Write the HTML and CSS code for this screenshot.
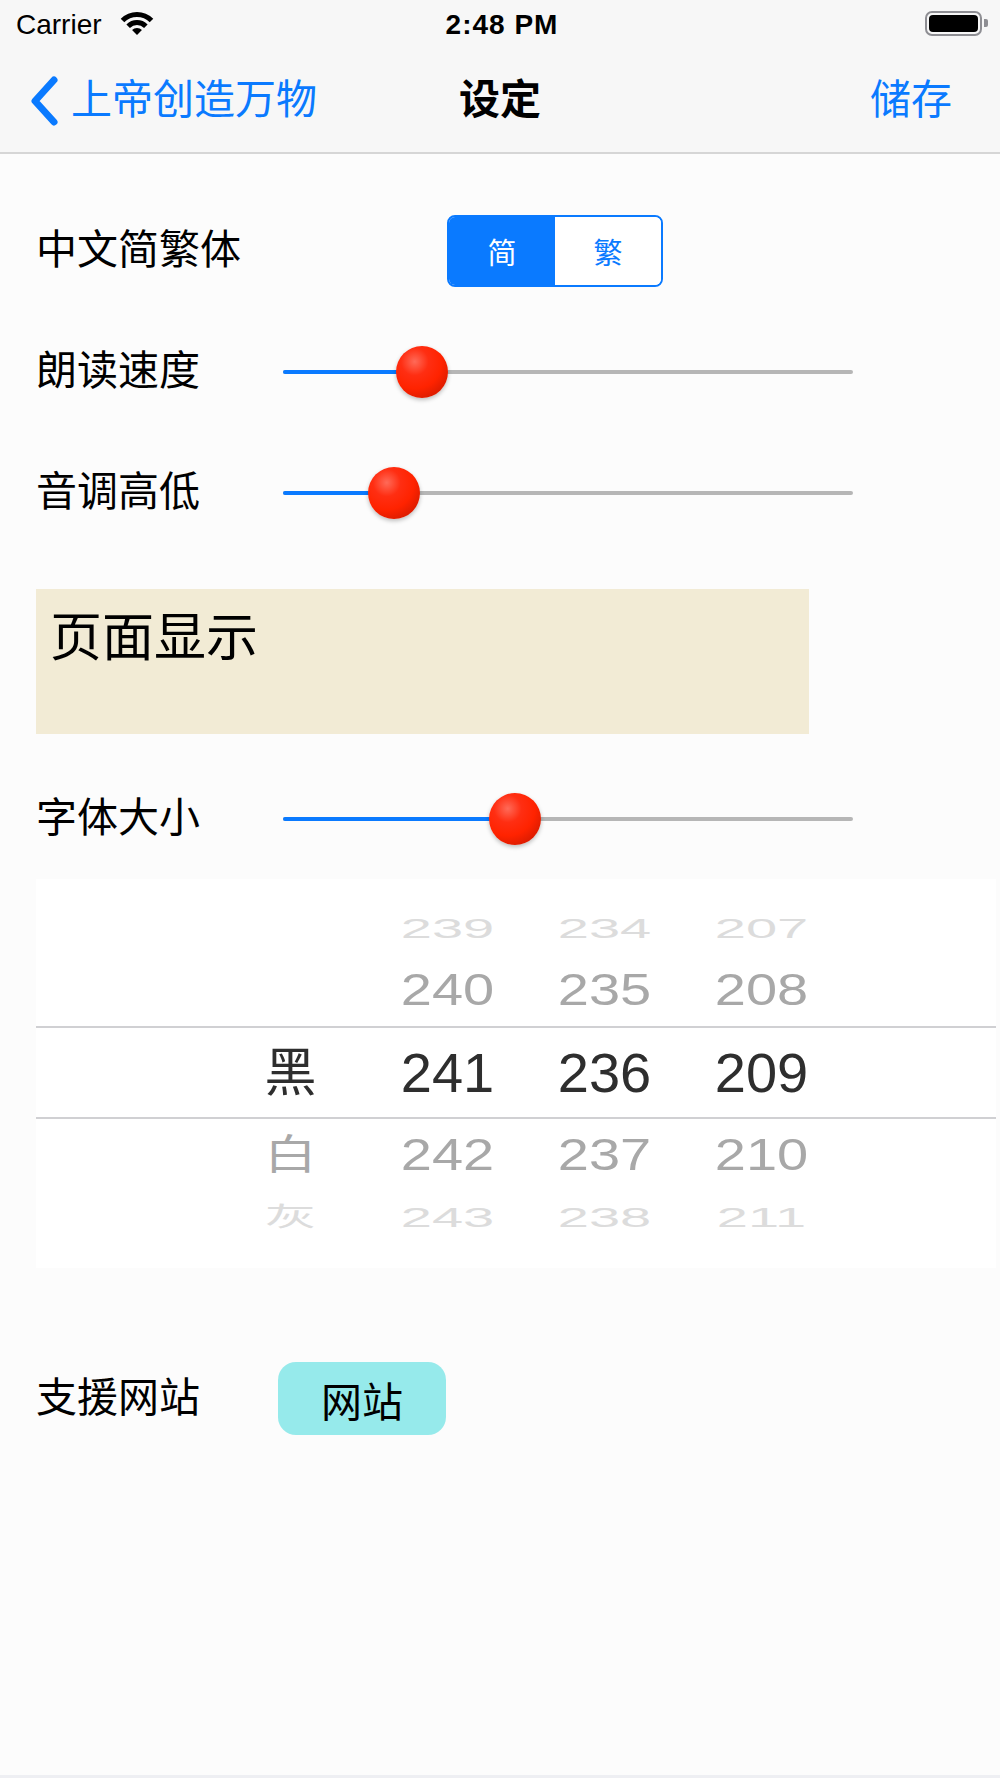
FILE: index.html
```html
<!DOCTYPE html>
<html lang="zh-CN">
<head>
    <meta charset="UTF-8">
    <meta name="viewport" content="width=device-width, initial-scale=1.0">
    <title>设定</title>
    <link rel="stylesheet" href="styles.css">
</head>
<body>
    <div class="screen">
        <!-- ステータスバー -->
        <div class="status-bar">
            <div class="status-left">
                <span class="carrier">Carrier</span>
                <svg class="wifi" viewBox="0 0 36 24">
                    <path d="M1.74 6.74 A23 23 0 0 1 34.26 6.74 L30.73 10.27 A18 18 0 0 0 5.27 10.27 Z"/>
                    <path d="M7.39 12.39 A15 15 0 0 1 28.61 12.39 L25.07 15.93 A10 10 0 0 0 10.93 15.93 Z"/>
                    <path d="M18 23 L13.05 18.05 A7 7 0 0 1 22.95 18.05 Z"/>
                </svg>
            </div>
            <div class="status-time">2:48 PM</div>
            <div class="status-right">
                <span class="battery"><span class="battery-level"></span></span>
                <span class="battery-nub"></span>
            </div>
        </div>

        <!-- ナビゲーション -->
        <nav class="nav-bar">
            <a class="nav-back" href="#">
                <svg class="chevron" viewBox="0 0 32 52">
                    <path d="M25 5 L6 26 L25 47"/>
                </svg>
                <span>上帝创造万物</span>
            </a>
            <h1 class="nav-title">设定</h1>
            <a class="nav-action" href="#">储存</a>
        </nav>

        <main class="settings">
            <div class="setting-row row-lang">
                <span class="setting-label">中文简繁体</span>
                <div class="segmented">
                    <button class="segment active">简</button>
                    <button class="segment">繁</button>
                </div>
            </div>

            <div class="setting-row row-slider row-speed">
                <span class="setting-label">朗读速度</span>
                <div class="slider">
                    <div class="slider-fill" style="width: 24.4%"></div>
                    <div class="slider-thumb" style="left: 24.4%"></div>
                </div>
            </div>

            <div class="setting-row row-slider row-pitch">
                <span class="setting-label">音调高低</span>
                <div class="slider">
                    <div class="slider-fill" style="width: 19.5%"></div>
                    <div class="slider-thumb" style="left: 19.5%"></div>
                </div>
            </div>

            <div class="display-box">页面显示</div>

            <div class="setting-row row-slider row-size">
                <span class="setting-label">字体大小</span>
                <div class="slider">
                    <div class="slider-fill" style="width: 40.7%"></div>
                    <div class="slider-thumb" style="left: 40.7%"></div>
                </div>
            </div>

            <!-- 色ピッカー -->
            <div class="picker">
                <div class="picker-row far">
                    <span class="picker-item name"></span>
                    <span class="picker-item">239</span>
                    <span class="picker-item">234</span>
                    <span class="picker-item">207</span>
                </div>
                <div class="picker-row near">
                    <span class="picker-item name"></span>
                    <span class="picker-item">240</span>
                    <span class="picker-item">235</span>
                    <span class="picker-item">208</span>
                </div>
                <div class="picker-row selected">
                    <span class="picker-item name">黑</span>
                    <span class="picker-item">241</span>
                    <span class="picker-item">236</span>
                    <span class="picker-item">209</span>
                </div>
                <div class="picker-row near">
                    <span class="picker-item name">白</span>
                    <span class="picker-item">242</span>
                    <span class="picker-item">237</span>
                    <span class="picker-item">210</span>
                </div>
                <div class="picker-row far">
                    <span class="picker-item name">灰</span>
                    <span class="picker-item">243</span>
                    <span class="picker-item">238</span>
                    <span class="picker-item">211</span>
                </div>
            </div>

            <div class="setting-row row-site">
                <span class="setting-label">支援网站</span>
                <button class="site-button">网站</button>
            </div>
        </main>

        <div class="bottom-bar"></div>
    </div>
</body>
</html>
```

FILE: styles.css
```css
* {
    margin: 0;
    padding: 0;
    box-sizing: border-box;
}

body {
    font-family: "Liberation Sans", "Noto Sans CJK SC", sans-serif;
    background: #fcfcfc;
    color: #000;
}

.screen {
    width: 1000px;
    height: 1778px;
    display: flex;
    flex-direction: column;
}

/* status bar */
.status-bar {
    height: 50px;
    background: #f7f7f7;
    display: grid;
    grid-template-columns: 1fr auto 1fr;
    align-items: center;
    padding: 0 12px 0 16px;
    font-size: 28px;
}

.status-left {
    display: flex;
    align-items: center;
    gap: 17px;
}

.wifi {
    width: 36px;
    height: 24px;
    fill: #000;
    margin-top: -2px;
}

.status-time {
    font-weight: 700;
    letter-spacing: 1px;
}

.status-right {
    display: flex;
    justify-content: flex-end;
    align-items: center;
    gap: 2px;
    margin-bottom: 4px;
}

.battery {
    width: 57px;
    height: 25px;
    border: 2px solid #8e8e93;
    border-radius: 7px;
    padding: 2px;
    display: flex;
}

.battery-level {
    flex: 1;
    background: #000;
    border-radius: 4px;
}

.battery-nub {
    width: 4px;
    height: 8px;
    background: #8e8e93;
    border-radius: 0 2px 2px 0;
}

/* navigation */
.nav-bar {
    height: 104px;
    background: #f7f7f7;
    border-bottom: 2px solid #d6d6d6;
    display: grid;
    grid-template-columns: 1fr auto 1fr;
    align-items: center;
    padding: 0 48px;
    font-size: 41px;
    line-height: 1.2;
}

.nav-back {
    display: flex;
    align-items: center;
    gap: 10px;
    margin-left: -19px;
    color: #0a7aff;
    text-decoration: none;
}

.chevron {
    width: 32px;
    height: 52px;
    fill: none;
    stroke: #0a7aff;
    stroke-width: 7;
    stroke-linecap: round;
    stroke-linejoin: round;
}

.nav-title {
    font-size: 41px;
    font-weight: 700;
}

.nav-action {
    justify-self: end;
    color: #0a7aff;
    text-decoration: none;
}

/* settings */
.settings {
    flex: 1;
    display: flex;
    flex-direction: column;
}

.setting-row {
    display: flex;
    align-items: center;
    padding-left: 36px;
}

.setting-label {
    flex: none;
    font-size: 41px;
    line-height: 1.2;
}

.row-lang {
    margin-top: 61px;
    height: 72px;
}

.row-lang .setting-label {
    width: 411px;
}

.segmented {
    display: flex;
    width: 216px;
    height: 72px;
    border: 2px solid #0a7aff;
    border-radius: 8px;
    overflow: hidden;
}

.segment {
    flex: 1;
    border: none;
    background: #fff;
    color: #0a7aff;
    font-family: "Noto Sans CJK SC", sans-serif;
    font-size: 29px;
}

.segment.active {
    background: #0a7aff;
    color: #fff;
}

.row-slider {
    height: 52px;
}

.row-slider .setting-label {
    width: 247px;
}

.row-speed {
    margin-top: 59px;
}

.row-pitch {
    margin-top: 69px;
}

.row-size {
    margin-top: 59px;
}

.slider {
    position: relative;
    width: 570px;
    height: 4px;
    background: #b6b6b6;
    border-radius: 2px;
}

.slider-fill {
    height: 100%;
    background: #0a7aff;
    border-radius: 2px;
}

.slider-thumb {
    position: absolute;
    top: 50%;
    width: 52px;
    height: 52px;
    border-radius: 50%;
    transform: translate(-50%, -50%);
    background: radial-gradient(circle at 36% 30%, #ff6a58 0%, #ff2e12 28%, #ff2300 55%, #dd1c00 78%, #9a1200 100%);
    box-shadow: 0 2px 4px rgba(0, 0, 0, 0.25);
}

.display-box {
    margin: 70px 0 0 36px;
    width: 773px;
    height: 145px;
    background: #f2ebd5;
    padding: 18px 14px;
    font-size: 52px;
    line-height: 1.2;
}

/* color picker */
.picker {
    margin: 34px 0 0 36px;
    width: 960px;
    height: 389px;
    background: #fff;
    padding: 18px 0 20px;
}

.picker-row {
    display: grid;
    grid-template-columns: repeat(4, 157px);
    padding-left: 176px;
    height: 62px;
    align-items: center;
    text-align: center;
    font-size: 56px;
}

.picker-item {
    display: block;
    line-height: 1;
}

.picker-item.name {
    font-size: 52px;
}

.picker-row.selected {
    height: 93px;
    margin: 5px 0;
    border-top: 2px solid #d0d0d3;
    border-bottom: 2px solid #d0d0d3;
    color: #2e2e2e;
}

.picker-row.near {
    color: #a8a8a8;
}

.picker-row.near .picker-item {
    transform: scaleY(0.78);
}

.picker-row.far {
    color: #dcdcdc;
}

.picker-row.far .picker-item {
    transform: scaleY(0.5);
}

/* support site */
.row-site {
    margin-top: 94px;
    height: 73px;
}

.row-site .setting-label {
    width: 242px;
}

.site-button {
    width: 168px;
    height: 73px;
    border: none;
    border-radius: 18px;
    background: #96eaeb;
    color: #000;
    font-family: "Noto Sans CJK SC", sans-serif;
    font-size: 41px;
}

.bottom-bar {
    height: 3px;
    background: #eeeff3;
}
```
